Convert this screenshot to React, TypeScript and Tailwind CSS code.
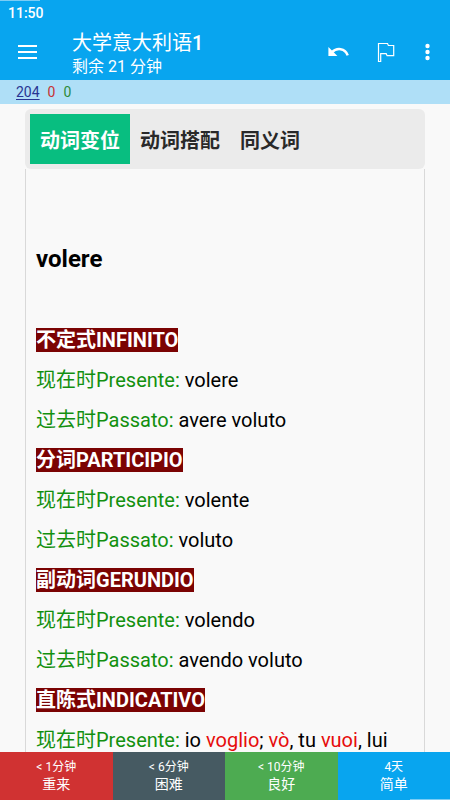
import type { ReactNode } from 'react';

type Form = { label: string; value: ReactNode };
type Section = { title: string; forms: Form[] };

const Red = ({ children }: { children: ReactNode }) => (
  <span className="text-[#e60c0c]">{children}</span>
);

const sections: Section[] = [
  {
    title: '不定式INFINITO',
    forms: [
      { label: '现在时Presente:', value: 'volere' },
      { label: '过去时Passato:', value: 'avere voluto' },
    ],
  },
  {
    title: '分词PARTICIPIO',
    forms: [
      { label: '现在时Presente:', value: 'volente' },
      { label: '过去时Passato:', value: 'voluto' },
    ],
  },
  {
    title: '副动词GERUNDIO',
    forms: [
      { label: '现在时Presente:', value: 'volendo' },
      { label: '过去时Passato:', value: 'avendo voluto' },
    ],
  },
  {
    title: '直陈式INDICATIVO',
    forms: [
      {
        label: '现在时Presente:',
        value: (
          <>
            io <Red>voglio</Red>; <Red>vò</Red>, tu <Red>vuoi</Red>, lui
          </>
        ),
      },
    ],
  },
];

const tabs = ['动词变位', '动词搭配', '同义词'];

const answers = [
  { time: '< 1分钟', label: '重来', color: 'bg-[#d03232]' },
  { time: '< 6分钟', label: '困难', color: 'bg-[#465a62]' },
  { time: '< 10分钟', label: '良好', color: 'bg-[#4dab51]' },
  { time: '4天', label: '简单', color: 'bg-[#08a5ef]' },
];

export default function App() {
  return (
    <div className="flex h-screen flex-col overflow-hidden bg-[#f9f9f9] font-[Roboto,'Noto_Sans_CJK_SC',sans-serif] text-black">
      <header className="shrink-0 bg-[#08a5ef] text-white">
        <div className="h-px w-10 bg-[#7bcdf5]" />
        <div className="px-2 text-sm leading-6 font-medium">11:50</div>
        <div className="flex h-[55px] items-center pr-3 pl-4">
          <button type="button" aria-label="菜单" className="w-14 shrink-0">
            <svg width="24" height="24" viewBox="0 0 24 24" fill="none" stroke="white" strokeWidth="1.8">
              <path d="M2 5H21M2 11H21M2 17H21" />
            </svg>
          </button>
          <div className="min-w-0 flex-1 pt-1">
            <h1 className="text-xl leading-6">
              大学意大利语<span className="font-medium">1</span>
            </h1>
            <p className="text-base leading-6">剩余 21 分钟</p>
          </div>
          <div className="flex items-center">
            <button type="button" aria-label="撤销" className="mr-6">
              <svg width="24" height="24" viewBox="0 0 24 24" fill="none">
                <path d="M-0.6 6V15H8.4L5.2 11.8Z" fill="white" className="translate-x-px" />
                <path d="M4 11.2C8.5 6.5 17.2 6.8 19.7 14.3" stroke="white" strokeWidth="2.5" />
              </svg>
            </button>
            <button type="button" aria-label="标记" className="mr-4">
              <svg width="24" height="24" viewBox="0 0 24 24" fill="none" stroke="white" strokeWidth="1.2">
                <path d="M2.5 20.5V2.5H11.5L12.4 4.5H17.7V14.7H11.1L10.2 12.7H4.7V20.5Z" />
              </svg>
            </button>
            <button type="button" aria-label="更多">
              <svg width="22" height="24" viewBox="0 0 22 24" fill="white">
                <circle cx="11.5" cy="5" r="2.2" />
                <circle cx="11.5" cy="11" r="2.2" />
                <circle cx="11.5" cy="17" r="2.2" />
              </svg>
            </button>
          </div>
        </div>
      </header>

      <div className="flex h-6 shrink-0 items-center gap-2 bg-[#afdff7] px-4 text-sm">
        <span className="text-[#283593] underline underline-offset-2">204</span>
        <span className="text-[#c73232]">0</span>
        <span className="text-[#2e8b3a]">0</span>
      </div>

      <main className="min-h-0 flex-1 overflow-hidden px-[25px] pt-[5px]">
        <nav className="flex h-15 items-center rounded-md bg-[#ebebeb] p-[5px]">
          {tabs.map((tab, i) => (
            <button
              key={tab}
              type="button"
              className={
                i === 0
                  ? 'h-full bg-[#08be80] px-[10px] pt-1 text-xl font-bold text-white'
                  : 'h-full px-[10px] pt-1 text-xl font-bold text-[#292929]'
              }
            >
              {tab}
            </button>
          ))}
        </nav>
        <article className="border-x border-[#d9d9d9] px-[10px] pt-[70px] text-xl leading-10">
          <h2 className="mb-[41px] text-2xl leading-10 font-bold">volere</h2>
          {sections.map((section) => (
            <section key={section.title}>
              <h3 className="font-bold text-white">
                <span className="bg-[#7b0303]">{section.title}</span>
              </h3>
              {section.forms.map((form) => (
                <p key={form.label}>
                  <span className="text-[#12900f]">{form.label}</span> {form.value}
                </p>
              ))}
            </section>
          ))}
        </article>
      </main>

      <footer className="relative grid h-12 shrink-0 grid-cols-4 text-white">
        {answers.map((answer) => (
          <button
            key={answer.label}
            type="button"
            className={`flex flex-col items-center justify-center pb-px ${answer.color}`}
          >
            <span className="text-xs leading-4">{answer.time}</span>
            <span className="text-sm leading-[18px]">{answer.label}</span>
          </button>
        ))}
        <div className="absolute right-0 bottom-0 h-px w-10 bg-[#7bcdf5]" />
      </footer>
    </div>
  );
}
